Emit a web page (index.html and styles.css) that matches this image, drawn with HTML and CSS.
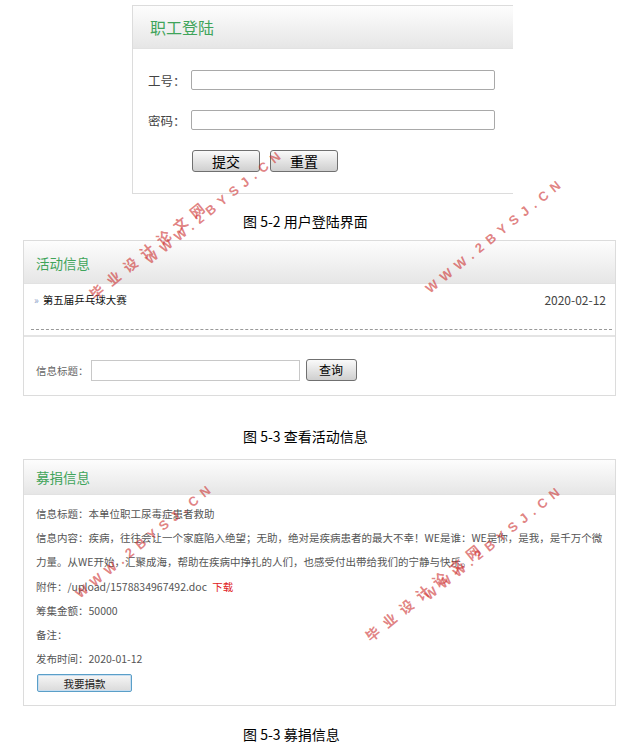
FILE: index.html
```html
<!DOCTYPE html>
<html lang="zh-CN">
<head>
  <meta charset="UTF-8">
  <title>职工登陆 / 活动信息 / 募捐信息</title>
  <link rel="stylesheet" href="styles.css">
</head>
<body>

  <!-- 职工登陆 -->
  <div class="login">
    <div class="login-head">职工登陆</div>
    <div class="login-body">
      <div class="field">
        <label>工号：</label>
        <input type="text" class="login-input">
      </div>
      <div class="field">
        <label>密码：</label>
        <input type="password" class="login-input">
      </div>
      <div class="btns">
        <button class="old-btn">提交</button>
        <button class="old-btn">重置</button>
      </div>
    </div>
  </div>
  <p class="caption">图 5-2 用户登陆界面</p>

  <!-- 活动信息 -->
  <div class="panel">
    <div class="panel-head">活动信息</div>
    <div class="news">
      <div class="news-item">
        <span class="arrow">»</span>
        <span class="news-title">第五届乒乓球大赛</span>
        <span class="date">2020-02-12</span>
      </div>
    </div>
    <div class="search">
      <label>信息标题：</label>
      <input type="text" class="search-input">
      <button class="old-btn small">查询</button>
    </div>
  </div>
  <p class="caption second">图 5-3 查看活动信息</p>

  <!-- 募捐信息 -->
  <div class="panel third">
    <div class="panel-head short">募捐信息</div>
    <div class="detail">
      <p>信息标题：本单位职工尿毒症患者救助</p>
      <p>信息内容：疾病，往往会让一个家庭陷入绝望；无助，绝对是疾病患者的最大不幸！WE是谁：WE是你，是我，是千万个微力量。从WE开始，汇聚成海，帮助在疾病中挣扎的人们，也感受付出带给我们的宁静与快乐。</p>
      <p>附件：/upload/1578834967492.doc <a class="down">下载</a></p>
      <p>筹集金额：50000</p>
      <p>备注：</p>
      <p>发布时间：2020-01-12</p>
      <button class="donate">我要捐款</button>
    </div>
  </div>
  <p class="caption third">图 5-3 募捐信息</p>

  <!-- watermarks -->
  <div class="mark cn" style="left:96px;top:302px">毕业设计论文网</div>
  <div class="mark" style="left:152px;top:267px">WWW.2BYSJ.CN</div>
  <div class="mark" style="left:432px;top:296px">WWW.2BYSJ.CN</div>
  <div class="mark" style="left:82px;top:601px">WWW.2BYSJ.CN</div>
  <div class="mark cn" style="left:372px;top:644px">毕业设计论文网</div>
  <div class="mark" style="left:431px;top:603px">WWW.2BYSJ.CN</div>

</body>
</html>
```

FILE: styles.css
```css
body {
  margin: 0;
  background: #fff;
  font-family: "Noto Sans CJK SC", "Noto Sans", sans-serif;
  color: #555;
  position: relative;
  width: 627px;
  height: 749px;
  overflow: hidden;
}

/* login box */
.login {
  margin: 5px 0 0 132px;
  width: 380px;
  border: 1px solid #dcdcdc;
  border-right: none;
}
.login-head {
  height: 42px;
  line-height: 42px;
  padding-left: 17px;
  font-size: 16px;
  color: #3fa45a;
  background: linear-gradient(#fdfdfd, #e6e6e6);
  border-bottom: 1px solid #e2e2e2;
}
.login-body {
  padding: 21px 0 21px 15px;
}
.field {
  display: flex;
  align-items: center;
  height: 20px;
  margin-bottom: 20px;
  font-size: 12.5px;
}
.field label {
  width: 43px;
  color: #444;
}
.login-input {
  box-sizing: border-box;
  width: 304px;
  height: 20px;
  border: 1px solid #a9a9a9;
  border-radius: 2px;
  margin: 0;
}
.btns {
  display: flex;
  gap: 10px;
  padding-left: 44px;
}
.old-btn {
  box-sizing: border-box;
  width: 68px;
  height: 22px;
  padding: 0;
  font-family: "Noto Sans CJK SC", sans-serif;
  font-size: 14px;
  line-height: 20px;
  color: #000;
  background: linear-gradient(#fafafa, #e2e2e2 55%, #cfcfcf);
  border: 1px solid #707070;
  border-radius: 3px;
}
.old-btn.small {
  width: 51px;
  font-size: 12px;
}

.caption {
  margin: 18px 0 0;
  padding-left: 243px;
  height: 18px;
  line-height: 18px;
  font-size: 14px;
  color: #000;
}
.caption.second { margin-top: 31px; }
.caption.third { margin-top: 19px; }

/* panels */
.panel {
  margin: 10px 0 0 23px;
  width: 591px;
  border: 1px solid #dcdcdc;
}
.panel.third { margin-top: 14px; }
.panel-head {
  height: 42px;
  line-height: 44px;
  padding-left: 12px;
  font-size: 13.5px;
  color: #3fa45a;
  background: linear-gradient(#fdfdfd, #e6e6e6);
  border-bottom: 1px solid #e2e2e2;
}
.panel-head.short {
  height: 34px;
  line-height: 35px;
}
.news {
  padding: 0 3px 0 7px;
}
.news-item {
  box-sizing: border-box;
  display: flex;
  align-items: flex-start;
  height: 46px;
  padding-top: 8px;
  line-height: 16px;
  font-size: 10.5px;
  color: #111;
  border-bottom: 1px dashed #999;
}
.arrow {
  color: #8aa0c8;
  font-size: 10px;
  margin: 0 4px 0 3px;
}
.date {
  margin-left: auto;
  margin-right: 6px;
  font-size: 12px;
  color: #444;
}
.search {
  box-sizing: border-box;
  display: flex;
  align-items: center;
  gap: 2px;
  height: 65px;
  padding: 10px 0 0 12px;
  border-top: 5px solid #fff;
  box-shadow: inset 0 2px 0 #e4e4e4;
  font-size: 10.5px;
  color: #666;
}
.search label { white-space: nowrap; }
.search-input {
  box-sizing: border-box;
  width: 209px;
  height: 21px;
  margin: 0 4px 0 0;
  border: 1px solid #c8c8c8;
}

/* donate detail */
.detail {
  padding: 7px 12px 13px;
  font-size: 10.5px;
  color: #555;
}
.detail p {
  margin: 0;
  line-height: 24.2px;
}
.down {
  color: #e02020;
  margin-left: 3px;
}
.donate {
  display: block;
  box-sizing: border-box;
  width: 95px;
  height: 18px;
  margin: 3px 0 0 1px;
  padding: 0;
  font-family: "Noto Sans CJK SC", sans-serif;
  font-size: 10.5px;
  color: #222;
  background: linear-gradient(#f6f6f6, #dadada);
  border: 1px solid #5a9fc8;
  border-radius: 2px;
  box-shadow: inset 0 0 0 1px #c9def0;
}

/* watermarks */
.mark {
  position: absolute;
  transform: translateY(-100%) rotate(-39deg);
  transform-origin: 0 100%;
  white-space: nowrap;
  font-family: "Liberation Sans", sans-serif;
  font-weight: bold;
  font-size: 13px;
  letter-spacing: 6px;
  line-height: 14px;
  color: rgba(205, 50, 50, 0.62);
}
.mark.cn {
  font-family: "Noto Sans CJK SC", sans-serif;
  font-size: 14px;
  letter-spacing: 7.5px;
  line-height: 16px;
}
```
